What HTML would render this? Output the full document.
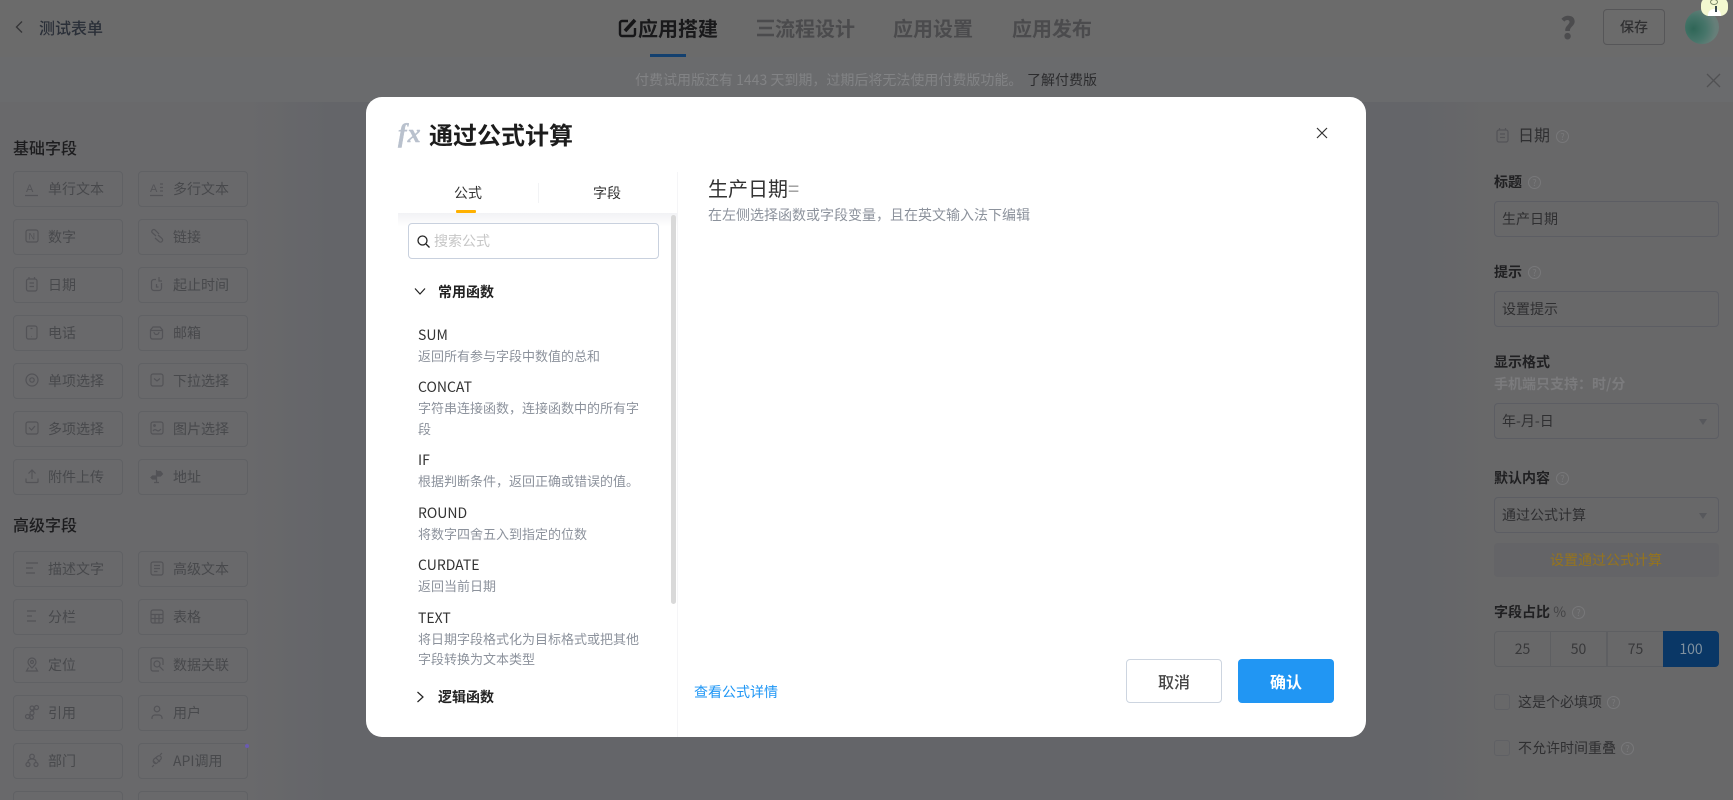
<!DOCTYPE html>
<html lang="zh"><head><meta charset="utf-8"><title>通过公式计算</title>
<style>
*{box-sizing:border-box;margin:0;padding:0}
html,body{width:1733px;height:800px;overflow:hidden;background:#646569;font-family:"Noto Sans CJK SC","Liberation Sans",sans-serif}
div,span,a{position:absolute}
#root{left:0;top:0;width:1733px;height:800px;overflow:hidden;background:#646569}
.t{white-space:nowrap;line-height:20px;font-size:14px}
svg{position:absolute;overflow:visible}
.f{width:110px;height:36px;border:1px solid #606164;border-radius:4px}
.f span{left:34px;top:7px;white-space:nowrap;line-height:20px;font-size:14px;color:#48494c}
.f svg{left:11px;top:9px;width:16px;height:16px;fill:none;stroke:#535357;stroke-width:1.2}
.h{font-size:16px;font-weight:500;color:#1c1c1e}
.lb{font-weight:700;color:#202022;left:1494px}
.q{width:13px;height:13px;border:1px solid #78787a;border-radius:50%;color:#78787a;font-size:9px;line-height:11px;text-align:center}
.in{left:1494px;width:225px;height:36px;border:1px solid #5c5d63;border-radius:4px}
.in span{left:7px;top:7px;font-size:14px;line-height:20px;color:#2f2f31;white-space:nowrap}
.ar{left:1699px;width:0;height:0;border:4px solid transparent;border-top:6px solid #57585c;border-bottom:0}
.n{left:418px;color:#333;font-size:14px}
.d{left:418px;color:#8c929c;font-size:13px}
.cb{left:1494px;width:16px;height:16px;border:1px solid #5f6064;border-radius:3px}
.sg{top:631px;height:36px;width:57px;border:1px solid #5e5f62;margin-left:-1px;text-align:center;font-size:14px;line-height:34px;color:#38383a}
</style></head><body><div id="root">
<!-- regions -->
<div style="left:0;top:102px;width:330px;height:698px;background:linear-gradient(to right,#69696b 0,#69696b 250px,#646569 330px)"></div>
<div style="left:1420px;top:102px;width:313px;height:698px;background:linear-gradient(to right,#646569 0,#686869 70px,#686869 100%)"></div>
<div style="left:0;top:0;width:1733px;height:57px;background:#6b6b6b"></div>
<div style="left:0;top:57px;width:1733px;height:45px;background:#6a6b6d"></div>

<!-- header -->
<svg style="left:13px;top:20px" width="12" height="14" fill="none" stroke="#353537" stroke-width="1.4"><path d="M9 1.5 3.5 7 9 12.5"/></svg>
<span class="t" style="left:39px;top:17px;font-size:16px;font-weight:500;color:#2a2f38">测试表单</span>
<svg style="left:618px;top:17px" width="20" height="22" fill="none" stroke="#161618" stroke-width="2.4"><path d="M10 4H4a2 2 0 0 0-2 2v11a2 2 0 0 0 2 2h11a2 2 0 0 0 2-2v-6"/><path d="M7 14 17 3" stroke-width="3.6"/></svg>
<span class="t" style="left:638px;top:16px;line-height:24px;font-size:20px;font-weight:700;color:#19191b">应用搭建</span>
<div style="left:650px;top:54px;width:36px;height:3px;background:#13406f"></div>
<svg style="left:756px;top:19px" width="19" height="18" fill="none" stroke="#4b4b4d" stroke-width="2.6"><path d="M1 2h17M3 9h13M1 16h17"/></svg>
<span class="t" style="left:775px;top:16px;line-height:24px;font-size:20px;font-weight:700;color:#4b4b4d">流程设计</span>
<span class="t" style="left:893px;top:16px;line-height:24px;font-size:20px;font-weight:700;color:#4b4b4d">应用设置</span>
<span class="t" style="left:1012px;top:16px;line-height:24px;font-size:20px;font-weight:700;color:#4b4b4d">应用发布</span>
<span class="t" style="left:1560px;top:10px;line-height:32px;font-size:30px;font-weight:900;color:#4c4c4e">?</span>
<div style="left:1603px;top:9px;width:62px;height:36px;border:1px solid #565658;border-radius:4px"></div>
<span class="t" style="left:1620px;top:17px;color:#2f2f31;font-weight:500">保存</span>
<div style="left:1685px;top:10px;width:34px;height:34px;border-radius:50%;background:radial-gradient(circle at 25% 55%,#2f6657 0,#47756a 40%,#667f79 70%,#6f7b78 100%)"></div>
<div style="left:1701px;top:-3px;width:27px;height:19px;border-radius:8px;background:#f3f8d0"></div>
<div style="left:1710px;top:-1px;width:8px;height:6px;border:1px solid #7b8a6a;border-radius:50%"></div>
<div style="left:1708px;top:9px;width:13px;height:7px;border-radius:6px 6px 0 0;background:#fff"></div>
<div style="left:1715px;top:6px;width:2px;height:6px;background:#37474f"></div>

<!-- banner -->
<span class="t" style="left:635px;top:70px;color:#828385">付费试用版还有 1443 天到期，过期后将无法使用付费版功能。</span>
<span class="t" style="left:1027px;top:70px;color:#2c2c2e">了解付费版</span>
<svg style="left:1707px;top:74px" width="13" height="13" stroke="#515153" stroke-width="1.3"><path d="M0 0 13 13M13 0 0 13"/></svg>

<!-- left panel -->
<span class="t h" style="left:13px;top:137px">基础字段</span>
<div class="f" style="left:13px;top:171px"><svg viewBox="0 0 16 16"><text x="1" y="11" font-size="11" fill="#535357" stroke="none" font-family="Liberation Sans">A</text><path d="M0 14.5h13"/></svg><span>单行文本</span></div>
<div class="f" style="left:138px;top:171px"><svg viewBox="0 0 16 16"><text x="0" y="11" font-size="11" fill="#535357" stroke="none" font-family="Liberation Sans">A</text><path d="M0 14.5h13M10 3h3M10 6.5h3M10 10h3"/></svg><span>多行文本</span></div>
<div class="f" style="left:13px;top:219px"><svg viewBox="0 0 16 16"><rect x="1" y="1" width="12" height="12" rx="2"/><text x="3.5" y="10.5" font-size="9" fill="#535357" stroke="none" font-family="Liberation Sans">N</text></svg><span>数字</span></div>
<div class="f" style="left:138px;top:219px"><svg viewBox="0 0 16 16"><path d="M6 7 2 3.5a2 2 0 0 1 3-2.5l4 4M8 6l4 3.500a2 2 0 0 1-3 3L5 9"/></svg><span>链接</span></div>
<div class="f" style="left:13px;top:267px"><svg viewBox="0 0 16 16"><rect x="1.500" y="2" width="10.500" height="12" rx="2"/><path d="M4 0v2M9.500 0v2M4.500 6h4.500M4.500 9.500h4.500"/></svg><span>日期</span></div>
<div class="f" style="left:138px;top:267px"><svg viewBox="0 0 16 16"><path d="M6 2.500H4a2.500 2.500 0 0 0-2.500 2.500v6A2.500 2.500 0 0 0 4 13.500h5a2.500 2.500 0 0 0 2.500-2.500V6M9 0v4h3M6.500 7v3h2"/></svg><span>起止时间</span></div>
<div class="f" style="left:13px;top:315px"><svg viewBox="0 0 16 16"><rect x="1.500" y="1" width="10.500" height="13" rx="2"/><path d="M5.500 3.500h2M6.500 11.500h.5"/></svg><span>电话</span></div>
<div class="f" style="left:138px;top:315px"><svg viewBox="0 0 16 16"><path d="M3 2h7l2.500 3v7a2 2 0 0 1-2 2h-8a2 2 0 0 1-2-2V5zM1 5.500h11.500M4 7a2.500 2.500 0 0 0 5 0"/></svg><span>邮箱</span></div>
<div class="f" style="left:13px;top:363px"><svg viewBox="0 0 16 16"><circle cx="7" cy="7" r="6"/><circle cx="7" cy="7" r="2.200"/></svg><span>单项选择</span></div>
<div class="f" style="left:138px;top:363px"><svg viewBox="0 0 16 16"><rect x="1" y="1" width="12" height="12" rx="2"/><path d="M4 5.500 7 8l3-2.500"/></svg><span>下拉选择</span></div>
<div class="f" style="left:13px;top:411px"><svg viewBox="0 0 16 16"><rect x="1" y="1" width="12" height="12" rx="2"/><path d="M4 6.500 6.500 9 10 5"/></svg><span>多项选择</span></div>
<div class="f" style="left:138px;top:411px"><svg viewBox="0 0 16 16"><rect x="1" y="1" width="12" height="12" rx="2"/><circle cx="4.500" cy="4.500" r=".8"/><path d="M3 10c1.500-2 2.500-1.500 4-.5s2.500 0 4-1.500"/></svg><span>图片选择</span></div>
<div class="f" style="left:13px;top:459px"><svg viewBox="0 0 16 16"><path d="M1 9.500v3a1 1 0 0 0 1 1h10a1 1 0 0 0 1-1v-3M7 10V1M3.500 4.500 7 1l3.500 3.500"/></svg><span>附件上传</span></div>
<div class="f" style="left:138px;top:459px"><svg viewBox="0 0 16 16"><path d="M6.500 1v13M4 13.500h5M7 2.500h3.500L12.500 5l-2 2H7zM6 7H2.500L1 8.500 2.500 10H6" fill="#535357"/></svg><span>地址</span></div>

<span class="t h" style="left:13px;top:514px">高级字段</span>
<div class="f" style="left:13px;top:551px"><svg viewBox="0 0 16 16"><path d="M1 2h12M1 7h7M1 12h9"/></svg><span>描述文字</span></div>
<div class="f" style="left:138px;top:551px"><svg viewBox="0 0 16 16"><rect x="1" y="1" width="12" height="13" rx="2"/><path d="M4 4.500h6M4 7.500h6M4 10.500h3.500"/></svg><span>高级文本</span></div>
<div class="f" style="left:13px;top:599px"><svg viewBox="0 0 16 16"><path d="M2 2h9M2 7h5M2 12h9"/></svg><span>分栏</span></div>
<div class="f" style="left:138px;top:599px"><svg viewBox="0 0 16 16"><rect x="1" y="1" width="12" height="13" rx="2"/><path d="M1 5.500h12M1 9.500h12M5 5.500V14M9 5.500V14"/></svg><span>表格</span></div>
<div class="f" style="left:13px;top:647px"><svg viewBox="0 0 16 16"><path d="M7 11C4.500 8.500 3 7 3 5a4 4 0 0 1 8 0c0 2-1.500 3.500-4 6z"/><circle cx="7" cy="5" r="1.500"/><path d="M3.500 10.500 1.500 14h11l-2-3.500"/></svg><span>定位</span></div>
<div class="f" style="left:138px;top:647px"><svg viewBox="0 0 16 16"><path d="M13 8V3a2 2 0 0 0-2-2H3a2 2 0 0 0-2 2v9a2 2 0 0 0 2 2h6"/><circle cx="7" cy="7" r="3"/><path d="m9.500 9.500 4 4"/></svg><span>数据关联</span></div>
<div class="f" style="left:13px;top:695px"><svg viewBox="0 0 16 16"><circle cx="2.500" cy="11.500" r="2"/><circle cx="7" cy="8" r="2"/><circle cx="7" cy="3" r="2"/><circle cx="11.500" cy="2.500" r="2"/><circle cx="6.500" cy="12.500" r="1.800"/><path d="m4 10 2-1M9.500 4 8 6.500"/></svg><span>引用</span></div>
<div class="f" style="left:138px;top:695px"><svg viewBox="0 0 16 16"><circle cx="7" cy="4" r="2.800"/><path d="M2 14v-1.500A3 3 0 0 1 5 10h4a3 3 0 0 1 3 2.500V14"/></svg><span>用户</span></div>
<div class="f" style="left:13px;top:743px"><svg viewBox="0 0 16 16"><circle cx="7" cy="3.500" r="2.300"/><circle cx="3" cy="11.500" r="2"/><circle cx="11" cy="11.500" r="2"/><path d="M3 9c0-2 1-3 4-3s4 1 4 3"/></svg><span>部门</span></div>
<div class="f" style="left:138px;top:743px"><svg viewBox="0 0 16 16"><path d="M2 14l2-2M12 0l-2 2M4 6l4-3c2-1 4 1 3 3L7 10C5 12 2 9 4 6zM6 5l4 4M3.500 8l3 3"/></svg><span>API调用</span></div>
<div style="left:245px;top:744px;width:4px;height:4px;border-radius:50%;background:#6b5bb0"></div>
<div class="f" style="left:13px;top:791px"></div>
<div class="f" style="left:138px;top:791px"></div>

<!-- right panel -->
<svg style="left:1496px;top:127px" width="14" height="16" fill="none" stroke="#535357" stroke-width="1.200"><rect x="1" y="3" width="11" height="12" rx="2"/><path d="M3.500 1v2M9.500 1v2M4 7h5M4 10.500h5"/></svg>
<span class="t" style="left:1518px;top:124px;font-size:16px;color:#2f2f31">日期</span>
<span class="q" style="left:1556px;top:130px">?</span>
<span class="t lb" style="top:172px">标题</span><span class="q" style="left:1528px;top:176px">?</span>
<div class="in" style="top:201px"><span>生产日期</span></div>
<span class="t lb" style="top:262px">提示</span><span class="q" style="left:1528px;top:266px">?</span>
<div class="in" style="top:291px"><span>设置提示</span></div>
<span class="t lb" style="top:352px">显示格式</span>
<span class="t" style="left:1494px;top:374px;font-size:14px;font-weight:700;color:#7b7b7d">手机端只支持：时/分</span>
<div class="in" style="top:403px"><span>年-月-日</span></div><div class="ar" style="top:419px"></div>
<span class="t lb" style="top:468px">默认内容</span><span class="q" style="left:1556px;top:472px">?</span>
<div class="in" style="top:497px"><span>通过公式计算</span></div><div class="ar" style="top:513px"></div>
<div style="left:1494px;top:543px;width:225px;height:34px;background:#646467;border-radius:4px"></div>
<span class="t" style="left:1550px;top:550px;color:#96741c">设置通过公式计算</span>
<span class="t lb" style="top:602px">字段占比 <span style="position:static;font-weight:400;color:#444446">%</span></span><span class="q" style="left:1572px;top:606px">?</span>
<div class="sg" style="left:1495px;border-radius:4px 0 0 4px">25</div>
<div class="sg" style="left:1551px">50</div>
<div class="sg" style="left:1608px">75</div>
<div class="sg" style="left:1664px;width:56px;background:#0a3766;border-color:#0a3766;color:#80919f;border-radius:0 4px 4px 0">100</div>
<div class="cb" style="top:694px"></div>
<span class="t" style="left:1518px;top:692px;color:#2f2f31">这是个必填项</span><span class="q" style="left:1607px;top:696px">?</span>
<div class="cb" style="top:740px"></div>
<span class="t" style="left:1518px;top:738px;color:#2f2f31">不允许时间重叠</span><span class="q" style="left:1621px;top:742px">?</span>

<!-- modal -->
<div style="left:366px;top:97px;width:1000px;height:640px;background:#fff;border-radius:16px"></div>
<span class="t" style="left:398px;top:119px;line-height:30px;font-size:26px;font-style:italic;font-weight:700;letter-spacing:1px;font-family:'Liberation Serif',serif;color:#b9c1cd;-webkit-text-stroke:.4px #b9c1cd">fx</span>
<span class="t" style="left:429px;top:117px;line-height:34px;font-size:24px;font-weight:700;color:#1c1c1c">通过公式计算</span>
<svg style="left:1316px;top:127px" width="12" height="12" stroke="#333" stroke-width="1.200"><path d="M1 1 11 11M11 1 1 11"/></svg>

<div style="left:677px;top:172px;width:1px;height:565px;background:#f5f5f7"></div>
<span class="t" style="left:454px;top:183px;color:#333">公式</span>
<span class="t" style="left:593px;top:183px;color:#333">字段</span>
<div style="left:538px;top:183px;width:1px;height:20px;background:#f2f3f5"></div>
<div style="left:456px;top:210px;width:20px;height:3px;background:#ffb100;border-radius:1px"></div>
<div style="left:398px;top:213px;width:279px;height:14px;background:linear-gradient(#f1f2f5,#fff)"></div>
<div style="left:408px;top:223px;width:251px;height:36px;border:1px solid #c9d1de;border-radius:4px;background:#fff"></div>
<svg style="left:417px;top:235px" width="13" height="13" fill="none" stroke="#222" stroke-width="1.300"><circle cx="5.500" cy="5.500" r="4.500"/><path d="m9 9 3.500 3.500"/></svg>
<span class="t" style="left:434px;top:231px;color:#c6c6c6">搜索公式</span>
<div style="left:671px;top:215px;width:5px;height:389px;background:#d9d9d9;border-radius:3px"></div>

<svg style="left:414px;top:287px" width="12" height="9" fill="none" stroke="#222" stroke-width="1.200"><path d="M1 1.500 6 7l5-5.500"/></svg>
<span class="t" style="left:438px;top:282px;font-weight:600;color:#222">常用函数</span>
<span class="t n" style="top:325px">SUM</span>
<span class="t d" style="top:346px">返回所有参与字段中数值的总和</span>
<span class="t n" style="top:377px">CONCAT</span>
<span class="t d" style="top:398px">字符串连接函数，连接函数中的所有字</span>
<span class="t d" style="top:419px">段</span>
<span class="t n" style="top:450px">IF</span>
<span class="t d" style="top:471px">根据判断条件，返回正确或错误的值。</span>
<span class="t n" style="top:503px">ROUND</span>
<span class="t d" style="top:524px">将数字四舍五入到指定的位数</span>
<span class="t n" style="top:555px">CURDATE</span>
<span class="t d" style="top:576px">返回当前日期</span>
<span class="t n" style="top:608px">TEXT</span>
<span class="t d" style="top:629px">将日期字段格式化为目标格式或把其他</span>
<span class="t d" style="top:649px">字段转换为文本类型</span>
<svg style="left:416px;top:691px" width="9" height="12" fill="none" stroke="#222" stroke-width="1.200"><path d="M1.500 1 7 6l-5.500 5"/></svg>
<span class="t" style="left:438px;top:687px;font-weight:600;color:#222">逻辑函数</span>

<span class="t" style="left:708px;top:176px;line-height:24px;font-size:20px;color:#333">生产日期<span style="position:static;color:#999">=</span></span>
<span class="t" style="left:708px;top:205px;color:#8c929c">在左侧选择函数或字段变量，且在英文输入法下编辑</span>
<span class="t" style="left:694px;top:682px;color:#1e96f5">查看公式详情</span>
<div style="left:1126px;top:659px;width:96px;height:44px;border:1px solid #cdd5e0;border-radius:4px;background:#fff;text-align:center;line-height:42px;font-size:16px;font-weight:500;color:#444">取消</div>
<div style="left:1238px;top:659px;width:96px;height:44px;border-radius:4px;background:#2196f3;text-align:center;line-height:44px;font-size:16px;font-weight:700;color:#fff">确认</div>
</div></body></html>
